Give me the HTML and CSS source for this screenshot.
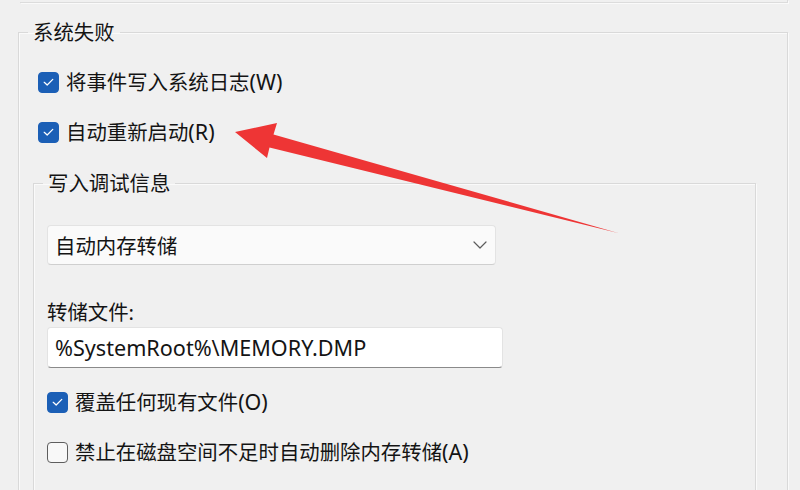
FILE: index.html
```html
<!DOCTYPE html>
<html lang="zh-CN">
<head>
<meta charset="utf-8">
<link rel="stylesheet" href="styles.css">
</head>
<body>
<div class="page">
  <div class="prev-group"></div>
  <fieldset class="group outer">
    <legend class="legend">系统失败</legend>
    <div class="rows outer-rows">
      <label class="check-row">
        <span class="box checked"><svg viewBox="0 0 20 20" width="20" height="20"><polyline points="5.5,10.3 8.6,13.2 14.5,7.2" fill="none" stroke="#fff" stroke-width="1.3" stroke-linecap="round" stroke-linejoin="round"/></svg></span>
        <span class="label-text">将事件写入系统日志<span class="latin">(W)</span></span>
      </label>
      <label class="check-row">
        <span class="box checked"><svg viewBox="0 0 20 20" width="20" height="20"><polyline points="5.5,10.3 8.6,13.2 14.5,7.2" fill="none" stroke="#fff" stroke-width="1.3" stroke-linecap="round" stroke-linejoin="round"/></svg></span>
        <span class="label-text">自动重新启动<span class="latin">(R)</span></span>
      </label>
    </div>
    <fieldset class="group inner">
      <legend class="legend">写入调试信息</legend>
      <div class="inner-body">
        <div class="select">
          <span class="select-text">自动内存转储</span>
          <svg class="chevron" viewBox="0 0 14 8" width="14" height="8"><polyline points="1,1 7,7 13,1" fill="none" stroke="#5c5c5c" stroke-width="1.2" stroke-linecap="round" stroke-linejoin="round"/></svg>
        </div>
        <div class="field-label">转储文件:</div>
        <div class="text-input">%SystemRoot%\MEMORY.DMP</div>
        <div class="rows inner-rows">
          <label class="check-row">
            <span class="box checked"><svg viewBox="0 0 20 20" width="20" height="20"><polyline points="5.5,10.3 8.6,13.2 14.5,7.2" fill="none" stroke="#fff" stroke-width="1.3" stroke-linecap="round" stroke-linejoin="round"/></svg></span>
            <span class="label-text">覆盖任何现有文件<span class="latin">(O)</span></span>
          </label>
          <label class="check-row">
            <span class="box"></span>
            <span class="label-text">禁止在磁盘空间不足时自动删除内存转储<span class="latin">(A)</span></span>
          </label>
        </div>
      </div>
    </fieldset>
  </fieldset>
  <svg class="arrow" viewBox="0 0 800 490" width="800" height="490">
    <polygon points="235,132 277,123 273.5,134.5 618,233 269.5,147.5 267,158" fill="#ee3535"/>
  </svg>
</div>
</body>
</html>
```
FILE: styles.css
```css
* { box-sizing: border-box; }
html, body { margin: 0; padding: 0; }
body {
  background: #f0f0f0;
  color: #141414;
  font-family: "Noto Sans", "Noto Sans CJK SC", sans-serif;
  font-size: 20.4px;
  line-height: 20px;
}
.page {
  position: relative;
  width: 800px;
  height: 490px;
  overflow: hidden;
}
.prev-group {
  height: 3px;
  margin: 0 12px 0 20px;
  border-bottom: 1px solid #dcdcdc;
  border-right: 1px solid #dcdcdc;
  box-shadow: 1px 1px 0 #fafafa;
}
.group {
  margin: 0;
  padding: 0;
  border: 1px solid #d9d9d9;
  box-shadow: inset 1px 1px 0 #fafafa, 1px 1px 0 #fafafa;
  min-width: 0;
}
.outer {
  margin: 19px 12px 0 18px;
  height: 520px;
}
.inner {
  margin: 16px 31px 0 14px;
  height: 340px;
}
.legend {
  padding: 0 5px;
  line-height: 20px;
  height: 20px;
}
.outer > .legend { margin-left: 9px; }
.inner > .legend { margin-left: 9px; }
.rows { display: flex; flex-direction: column; }
.outer-rows { margin-top: 15px; padding-left: 19px; }
.check-row {
  display: flex;
  align-items: center;
  gap: 7px;
  height: 50px;
}
.box {
  width: 21px;
  height: 21px;
  border-radius: 4px;
  border: 1px solid #5e5e5e;
  background: #f8f8f8;
  flex: none;
  display: flex;
  align-items: center;
  justify-content: center;
}
.box.checked {
  background: #1b5fb6;
  border-color: #1b5fb6;
}
.label-text { white-space: nowrap; }
.latin { font-size: 21.5px; }
.inner-body { padding-left: 13px; padding-top: 32px; }
.select {
  width: 449px;
  height: 40px;
  background: #fafafa;
  border: 1px solid #e3e3e3;
  border-bottom-color: #cfcfcf;
  border-radius: 4px;
  display: flex;
  align-items: center;
  justify-content: space-between;
  padding: 0 8px 0 7px;
}
.select-text { padding-top: 1px; }
.field-label { margin-top: 37px; }
.text-input {
  margin-top: 5px;
  width: 456px;
  height: 41px;
  background: #ffffff;
  border: 1px solid #e3e3e3;
  border-bottom: 1px solid #8a8a8a;
  border-radius: 4px;
  padding: 0 7px;
  display: flex;
  align-items: center;
  white-space: nowrap;
  font-size: 21.6px;
}
.inner-rows { margin-top: 9px; }
.arrow {
  position: absolute;
  left: 0;
  top: 0;
  pointer-events: none;
}
```
